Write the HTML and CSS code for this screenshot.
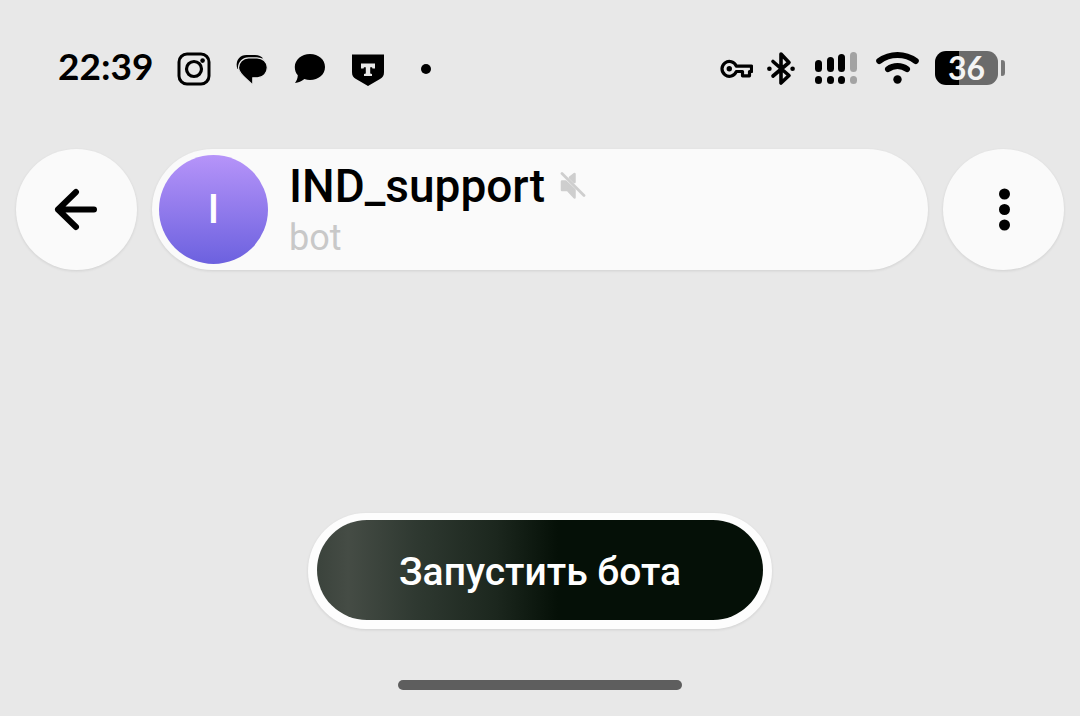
FILE: index.html
```
<!DOCTYPE html>
<html lang="ru">
<head>
<meta charset="utf-8">
<meta name="viewport" content="width=device-width, initial-scale=1">
<title>IND_support</title>
<link rel="stylesheet" href="styles.css">
</head>
<body>
<div class="status">
  <div class="status-left">
    <time class="clock">22:39</time>
    <svg width="34" height="34" viewBox="0 0 34 34" fill="none" stroke="#000"><rect x="2" y="2" width="30" height="30" rx="8" stroke-width="3"/><circle cx="17" cy="17" r="7.5" stroke-width="3.200"/><circle cx="25.600" cy="8.600" r="2.300" fill="#000" stroke="none"/></svg>
    <svg width="34" height="34" viewBox="0 0 34 34"><path d="M2.500 17C0 11 3 3 11.500 3H20c4 0 6.300 1.300 8 3.300"/><path d="M13.500 5.800H22c5.500 0 10.300 4.200 10.300 9.700s-4 10.300-9.800 10.300h-4.700v8C16 29.500 3.500 23 3.500 15.800c0-5.500 4.500-10 10-10Z" stroke="#e8e8e8" stroke-width="1.200"/></svg>
    <svg width="34" height="34" viewBox="0 0 34 34"><path d="M17 2C25.500 2 32 7.500 32 15S25.500 28 17 28c-2 0-3.900-.3-5.600-.9-2.800 2.200-5.900 3.800-9.400 4 1.600-2.200 2.700-4.900 2.800-7.800C2.700 21 1.800 18 1.800 15 1.800 7.800 8.500 2 17 2Z"/></svg>
    <svg width="34" height="34" viewBox="0 0 34 34"><path d="M1 2.500h32V20c0 3.800-1.200 5.500-4 7.100L17 34 5 27.100c-2.800-1.600-4-3.300-4-7.100Z"/><path fill="#e8e8e8" d="M10 11.500h14v5h-2.500l-.5-1.300h-1.800v6.300l1.800.4v2h-8v-2l1.800-.4v-6.300H13l-.5 1.300H10Z"/></svg>
    <svg width="34" height="34" viewBox="0 0 34 34"><circle cx="17" cy="17" r="5"/></svg>
  </div>
  <div class="status-right">
    <svg width="33" height="34" viewBox="0 0 33 34" fill="none" stroke="#000" stroke-width="3.200"><path d="M16.300 14.200H31.500v5.300h-2v4.300h-7v-4.300h-6.200A7.400 7.400 0 1 1 16.300 14.200Z" stroke-linejoin="round"/><circle cx="9.300" cy="16.800" r="2.700" fill="#000" stroke="none"/></svg>
    <svg width="34" height="34" viewBox="0 0 34 34" fill="none" stroke="#000" stroke-width="3.600" stroke-linecap="round" stroke-linejoin="round"><path d="M6 9.500 22 23.500 14 31V2L22 10.500 6 24"/><circle cx="2.400" cy="16.700" r="2.300" fill="#000" stroke="none"/><circle cx="25.600" cy="16.700" r="2.300" fill="#000" stroke="none"/></svg>
    <svg width="47" height="34" viewBox="0 0 47 34"><rect y="8" width="7" height="12" rx="3.500"/><rect x="12" y="5" width="7" height="15" rx="3.500"/><rect x="23" y="2" width="7" height="18" rx="3.500"/><rect x="35" width="7" height="20" rx="3.500" fill="#a3a3a3"/><rect y="24" width="7" height="8" rx="3.500"/><rect x="12" y="24" width="7" height="8" rx="3.500"/><rect x="23" y="24" width="7" height="8" rx="3.500"/><rect x="35" y="24" width="7" height="8" rx="3.500" fill="#a3a3a3"/></svg>
    <svg width="45" height="34" viewBox="0 0 45 34" fill="none" stroke="#000" stroke-width="6" stroke-linecap="round"><path d="M3.200 9C14 1 29 1 39.800 9M12 17.200c5.500-4.200 13.500-4.200 19 0"/><circle cx="21.500" cy="27.500" r="4.200" fill="#000" stroke="none"/></svg>
    <div class="battery"><span class="battery-level">36</span><span class="battery-tip"></span></div>
  </div>
</div>

<header class="header">
  <button class="round" type="button" aria-label="Назад"><svg width="46" height="46" viewBox="0 0 46 46" fill="none" stroke="#000" stroke-width="6" stroke-linecap="round" stroke-linejoin="round"><path d="M40 22.500H4M22 5 4 22.500l18 17.500"/></svg></button>
  <div class="peer">
    <div class="avatar">I</div>
    <div class="peer-text">
      <div class="peer-row"><h1 class="peer-name">IND_support</h1><svg width="28" height="28" viewBox="0 0 28 28" fill="#cecece" stroke="#cecece" stroke-linejoin="round" stroke-linecap="round"><path d="m11 5.500 4.500-3.500v8Z" stroke-width="2.500"/><path d="M3 9.500h3.500L15.500 18v7.500L8.500 18H3Z" stroke-width="2.500"/><path d="m3 1.500 22 22" stroke-width="2.800"/></svg></div>
      <div class="peer-kind">bot</div>
    </div>
  </div>
  <button class="round" type="button" aria-label="Меню"><svg width="46" height="46" viewBox="0 0 46 46"><circle cx="23.500" cy="7" r="5.500"/><circle cx="23.500" cy="22.500" r="5.500"/><circle cx="23.500" cy="38" r="5.500"/></svg></button>
</header>

<main class="chat"></main>

<footer class="footer">
  <div class="start-frame"><button class="start" type="button">Запустить бота</button></div>
  <div class="home-bar"></div>
</footer>
</body>
</html>
```
FILE: styles.css
```
* { box-sizing: border-box; }

body {
  margin: 0;
  min-height: 100vh;
  display: flex;
  flex-direction: column;
  background: #e8e8e8;
  color: #000;
  font-family: Roboto, "Noto Sans", sans-serif;
}

svg { display: block; flex: none; }

button {
  border: 0;
  padding: 0;
  font: inherit;
  cursor: pointer;
}

.status {
  display: flex;
  justify-content: space-between;
  align-items: center;
  padding: 51px 75px 49px 58px;
}

.status-left,
.status-right {
  display: flex;
  align-items: center;
  height: 36px;
}

.status-left { gap: 24px; }
.status-right { gap: 14px; }

.clock {
  font: 700 37px/34px Lato, sans-serif;
  padding-bottom: 6px;
}

.battery {
  display: flex;
  align-items: center;
  gap: 3px;
  padding-bottom: 2px;
}

.battery-level {
  width: 63px;
  height: 34px;
  border-radius: 11px;
  background: linear-gradient(90deg, #000 38%, #6b6b6b 38%);
  color: #f4f4f4;
  font: 700 32px/34px Lato, sans-serif;
  text-align: center;
}

.battery-tip {
  width: 4px;
  height: 16px;
  border-radius: 1px 4px 4px 1px;
  background: #777;
}

.header {
  display: flex;
  gap: 15px;
  padding: 13px 16px 0;
}

.round,
.peer {
  height: 121px;
  border-radius: 61px;
  background: #fafafa;
  box-shadow: 0 1px 3px rgba(0, 0, 0, 0.1);
}

.round {
  flex: none;
  width: 121px;
  display: flex;
  align-items: center;
  justify-content: center;
}

.peer {
  flex: 1;
  display: flex;
  align-items: center;
  gap: 21px;
  padding: 0 7px;
}

.avatar {
  width: 109px;
  height: 109px;
  border-radius: 50%;
  background: linear-gradient(#b694f9, #6c61df);
  color: #fff;
  font-size: 40px;
  font-weight: 500;
  line-height: 109px;
  text-align: center;
}

.peer-text { padding-top: 2px; }

.peer-row {
  display: flex;
  align-items: center;
  gap: 14px;
}

.peer-name {
  margin: 0;
  font-size: 46px;
  font-weight: 500;
  line-height: 54px;
}

.peer-kind {
  color: #c8c8c8;
  font-size: 36px;
  line-height: 50px;
}

.chat { flex: 1; }

.footer {
  display: flex;
  flex-direction: column;
  align-items: center;
  gap: 51px;
  padding-bottom: 26px;
}

.start-frame {
  padding: 7px 9px 9px;
  border-radius: 58px;
  background: #fdfdfd;
  box-shadow: 0 1px 3px rgba(0, 0, 0, 0.1);
}

.start {
  display: block;
  height: 100px;
  padding: 4px 82px 0;
  border-radius: 50px;
  background: linear-gradient(90deg, #3b433c, #454c45 7%, #2f3931 22%, #1c271e 40%, #051007 54%, #051007);
  color: #fff;
  font-size: 39px;
  font-weight: 500;
}

.home-bar {
  width: 284px;
  height: 10px;
  border-radius: 5px;
  background: #5e5e5e;
}
```
